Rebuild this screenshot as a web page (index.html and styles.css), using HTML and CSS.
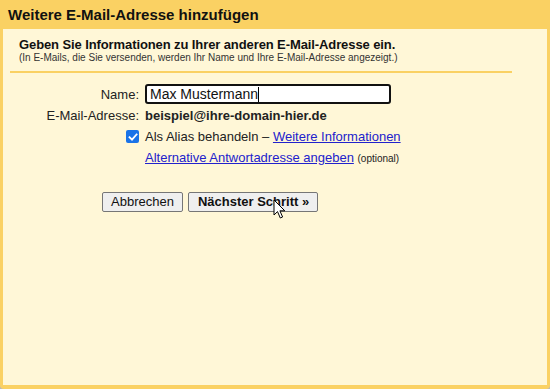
FILE: index.html
```html
<!DOCTYPE html>
<html lang="de">
<head>
<meta charset="utf-8">
<title>Weitere E-Mail-Adresse hinzufügen</title>
<link rel="stylesheet" href="styles.css">
</head>
<body>
<div class="window">
  <div class="titlebar">Weitere E-Mail-Adresse hinzufügen</div>
  <div class="panel">
    <div class="intro">
      <div class="intro-head">Geben Sie Informationen zu Ihrer anderen E-Mail-Adresse ein.</div>
      <div class="intro-sub">(In E-Mails, die Sie versenden, werden Ihr Name und Ihre E-Mail-Adresse angezeigt.)</div>
    </div>
    <div class="divider"></div>
    <div class="form">
      <div class="label label-name">Name:</div>
      <div class="field"><div class="input">Max Mustermann<span class="caret"></span></div></div>
      <div class="label">E-Mail-Adresse:</div>
      <div class="field value">beispiel@ihre-domain-hier.de</div>
      <div class="label check-cell"><span class="checkbox"><svg width="10" height="10" viewBox="0 0 10 10"><path d="M1.5 5.2 L4 7.6 L8.6 2.4" fill="none" stroke="#fff" stroke-width="1.8" stroke-linecap="square"/></svg></span></div>
      <div class="field">Als Alias behandeln – <a href="#" class="link">Weitere Informationen</a></div>
      <div class="label"></div>
      <div class="field"><a href="#" class="link">Alternative Antwortadresse angeben</a> <span class="optional">(optional)</span></div>
    </div>
    <div class="buttons">
      <button class="btn">Abbrechen</button>
      <button class="btn btn-primary">Nächster Schritt »</button>
      <svg class="cursor" width="14" height="22" viewBox="0 0 14 22"><path d="M1 1 L1 16 L4.5 12.6 L7.3 19 L9.6 18 L6.9 11.8 L11.8 11.8 Z" fill="#fff" stroke="#000" stroke-width="1" stroke-linejoin="miter"/></svg>
    </div>
  </div>
</div>
</body>
</html>
```
FILE: styles.css
```css
html, body {
  margin: 0;
  padding: 0;
}
body {
  background: #b9b9b9;
  font-family: "Liberation Sans", Arial, sans-serif;
  color: #222;
}
.window {
  width: 550px;
  height: 389px;
  box-sizing: border-box;
  background: #fad163;
  padding: 0 3px 4px 3px;
  border-radius: 0 0 4px 4px;
  display: flex;
  flex-direction: column;
}
.titlebar {
  height: 29px;
  box-sizing: border-box;
  padding: 6px 0 0 5px;
  font-size: 15px;
  font-weight: bold;
  color: #111;
  line-height: 18px;
}
.panel {
  flex: 1;
  background: #fff7d7;
  position: relative;
}
.intro {
  padding: 8px 0 0 16px;
}
.intro-head {
  font-size: 13px;
  font-weight: bold;
  line-height: 15px;
  color: #111;
  letter-spacing: -0.1px;
}
.intro-sub {
  font-size: 10px;
  line-height: 11px;
  color: #333;
}
.divider {
  margin: 8px 0 0 7px;
  width: 502px;
  height: 2px;
  background: #fad163;
}
.form {
  display: grid;
  grid-template-columns: 136px 1fr;
  column-gap: 6px;
  margin-top: 11px;
  font-size: 13px;
  line-height: 15px;
}
.label {
  text-align: right;
  color: #222;
}
.label-name {
  padding-top: 3px;
}
.field {
  color: #222;
}
.input {
  width: 246px;
  height: 20px;
  box-sizing: border-box;
  border: 2px solid #111;
  border-radius: 3px;
  background: #fff;
  padding: 1px 0 0 3px;
  font-size: 14px;
  line-height: 15px;
  color: #111;
  display: flex;
  align-items: center;
}
.caret {
  display: inline-block;
  width: 1px;
  height: 15px;
  background: #000;
}
.form > :nth-child(3), .form > :nth-child(4) {
  margin-top: 4px;
}
.value {
  font-weight: bold;
}
.form > :nth-child(5), .form > :nth-child(6) {
  margin-top: 6px;
}
.form > :nth-child(7), .form > :nth-child(8) {
  margin-top: 6px;
}
.check-cell {
  display: flex;
  justify-content: flex-end;
  align-items: center;
}
.checkbox {
  width: 13px;
  height: 13px;
  border-radius: 2px;
  background: #1a73e8;
  display: flex;
  align-items: center;
  justify-content: center;
}
.link {
  color: #2222cc;
  text-decoration: underline;
}
.optional {
  font-size: 10px;
}
.buttons {
  display: flex;
  gap: 5px;
  margin: 26px 0 0 99px;
  position: relative;
}
.btn {
  font-family: "Liberation Sans", Arial, sans-serif;
  font-size: 13px;
  height: 20px;
  padding: 0 8px;
  background: #efefef;
  border: 1px solid #767676;
  border-radius: 2px;
  color: #111;
  line-height: 16px;
}
.btn-primary {
  font-weight: bold;
  padding: 0 8px 0 9px;
}
.cursor {
  position: absolute;
  left: 171px;
  top: 7px;
}
```
